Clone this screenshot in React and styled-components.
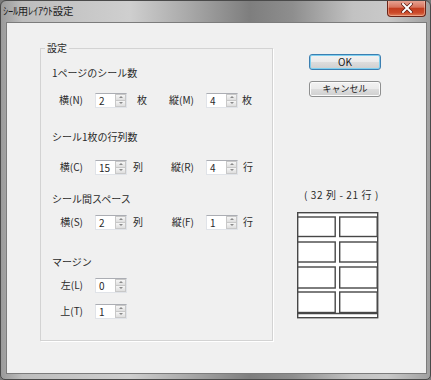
import React from 'react';
import styled, { createGlobalStyle } from 'styled-components';

const GlobalStyle = createGlobalStyle`
  html, body {
    margin: 0;
    padding: 0;
    background: #7a7a7a;
  }
  body {
    font-family: "Noto Sans CJK JP", "Noto Sans", sans-serif;
    color: #2a2a2a;
  }
`;

const Window = styled.div`
  width: 431px;
  height: 380px;
  box-sizing: border-box;
  display: flex;
  flex-direction: column;
  background: linear-gradient(
    90deg,
    #9a9a9a 0%,
    #bdbdbd 5%,
    #cfcfcf 30%,
    #a8a8a8 44%,
    #7e7e7e 58%,
    #8e8e8e 68%,
    #c2c2c2 82%,
    #c9c9c9 90%,
    #a0a0a0 100%
  );
  border: 1px solid #4a4a4a;
  border-radius: 6px 6px 5px 5px;
  overflow: hidden;
`;

const TitleBar = styled.div`
  height: 21px;
  display: flex;
  align-items: flex-start;
  flex-shrink: 0;
`;

const Title = styled.span`
  margin-left: 2px;
  font-size: 10.5px;
  line-height: 20px;
  color: #1c1c1c;
  letter-spacing: -0.3px;
`;

const CloseButton = styled.div`
  margin-left: auto;
  margin-right: 4px;
  margin-top: -1px;
  width: 39px;
  height: 17px;
  box-sizing: border-box;
  display: flex;
  align-items: center;
  justify-content: center;
  border: 1px solid #6b2418;
  border-top: none;
  border-radius: 0 0 4px 4px;
  background: linear-gradient(
    180deg,
    #e9a99a 0%,
    #d8735c 45%,
    #c33d1f 52%,
    #cc4a2a 80%,
    #e0805c 100%
  );
  box-shadow: inset 0 0 0 1px rgba(255, 210, 190, 0.45);
`;

const Client = styled.div`
  flex: 1;
  margin: 0 3px 5px 5px;
  border: 1px solid #7c7c7c;
  background: #f0f0f0;
  display: flex;
  align-items: flex-start;
`;

const Group = styled.fieldset`
  margin: 18px 0 0 33px;
  padding: 0 0 21px 4px;
  width: 233px;
  box-sizing: border-box;
  min-width: 0;
  border: 1px solid #d3d3d3;
  box-shadow: 1px 1px 0 #ffffff;
`;

const Legend = styled.legend`
  padding: 0 2px;
  font-size: 10px;
  line-height: 14px;
`;

const GroupBody = styled.div`
  display: flex;
  flex-direction: column;
  padding-left: 7px;
`;

const Heading = styled.div`
  margin-top: ${p => p.$top}px;
  font-size: 10px;
  line-height: 14px;
  height: 14px;
  white-space: nowrap;
`;

const Row = styled.div`
  margin-top: ${p => p.$top}px;
  height: 16px;
  display: flex;
  align-items: center;
`;

const Field = styled.div`
  display: flex;
  align-items: center;
  width: ${p => (p.$width ? `${p.$width}px` : 'auto')};
`;

const FieldLabel = styled.span`
  width: 31px;
  margin-right: 12px;
  text-align: right;
  font-size: 10px;
  line-height: 14px;
  white-space: nowrap;
`;

const Unit = styled.span`
  margin-left: ${p => p.$gap}px;
  font-size: 10px;
  line-height: 14px;
`;

const Spin = styled.div`
  width: 32px;
  height: 15px;
  box-sizing: border-box;
  display: flex;
  border: 1px solid #e0e3e8;
  border-top-color: #abadb3;
  background: #fff;
`;

const SpinValue = styled.span`
  flex: 1;
  padding-left: 3px;
  font-size: 10px;
  line-height: 13px;
`;

const SpinButtons = styled.div`
  width: 11px;
  display: flex;
  flex-direction: column;
`;

const SpinButton = styled.div`
  flex: 1;
  display: flex;
  align-items: center;
  justify-content: center;
  border: 1px solid #c8c8c8;
  margin-top: ${p => (p.$down ? '-1px' : '0')};
  background: linear-gradient(180deg, #f6f6f6, #dedede);
  &::after {
    content: '';
    width: 0;
    height: 0;
    border-left: 2px solid transparent;
    border-right: 2px solid transparent;
    ${p =>
      p.$down
        ? 'border-top: 2px solid #8a8a8a;'
        : 'border-bottom: 2px solid #8a8a8a;'}
  }
`;

const Side = styled.div`
  margin-top: 31px;
  padding-left: 24px;
  display: flex;
  flex-direction: column;
  align-items: flex-start;
`;

const Button = styled.div`
  margin-left: 12px;
  margin-top: ${p => p.$top || 0}px;
  width: 72px;
  height: 16px;
  box-sizing: border-box;
  display: flex;
  align-items: center;
  justify-content: center;
  border: 1px solid ${p => (p.$default ? '#3c7fb1' : '#8e8f8f')};
  border-radius: 3px;
  background: linear-gradient(180deg, #f2f2f2 0%, #ebebeb 48%, #dddddd 52%, #cfcfcf 100%);
  box-shadow: ${p =>
    p.$default ? 'inset 0 0 0 1px #7fd0f0' : 'inset 0 0 0 1px #fbfbfb'};
  font-size: ${p => p.$size || 10}px;
  line-height: 14px;
  color: #1a1a1a;
`;

const Caption = styled.div`
  margin-top: 92px;
  margin-left: 7px;
  font-size: 10px;
  line-height: 12px;
  letter-spacing: 0.6px;
  white-space: pre;
`;

const PreviewBox = styled.svg`
  margin-top: 11px;
  display: block;
`;

const SpinBox = ({ value }) => (
  <Spin>
    <SpinValue>{value}</SpinValue>
    <SpinButtons>
      <SpinButton />
      <SpinButton $down />
    </SpinButtons>
  </Spin>
);

const Pair = ({ label, value, unit, gap, width }) => (
  <Field $width={width}>
    <FieldLabel>{label}</FieldLabel>
    <SpinBox value={value} />
    {unit && <Unit $gap={gap}>{unit}</Unit>}
  </Field>
);

const cols = [0.5, 42.5];
const rows = [
  [5, 19.5],
  [30, 20],
  [55, 21],
  [80, 20.5],
];

const Preview = () => (
  <PreviewBox width="82" height="107" viewBox="0 0 82 107">
    <g fill="#fff" stroke="#474747" strokeWidth="1.4">
      <rect x="0.7" y="0.7" width="80" height="105" />
      <line x1="0.7" y1="101.5" x2="80.7" y2="101.5" />
      {rows.map(([y, h]) =>
        cols.map(x => (
          <rect key={`${x}-${y}`} x={x + 0.2} y={y} width="37.5" height={h} />
        ))
      )}
    </g>
  </PreviewBox>
);

const CloseIcon = () => (
  <svg width="12" height="10" viewBox="0 0 12 10">
    <path d="M2 1 L10 9 M10 1 L2 9" stroke="#5a1a10" strokeWidth="3.4" strokeLinecap="square" />
    <path d="M2 1 L10 9 M10 1 L2 9" stroke="#fff" strokeWidth="2" strokeLinecap="square" />
  </svg>
);

export default function App() {
  return (
    <>
      <GlobalStyle />
      <Window>
        <TitleBar>
          <Title>ｼｰﾙ用ﾚｲｱｳﾄ設定</Title>
          <CloseButton>
            <CloseIcon />
          </CloseButton>
        </TitleBar>
        <Client>
          <Group>
            <Legend>設定</Legend>
            <GroupBody>
              <Heading $top={11}>1ページのシール数</Heading>
              <Row $top={12}>
                <Pair label="横(N)" value="2" unit="枚" gap={10} width={111} />
                <Pair label="縦(M)" value="4" unit="枚" gap={4} />
              </Row>

              <Heading $top={22}>シール1枚の行列数</Heading>
              <Row $top={15}>
                <Pair label="横(C)" value="15" unit="列" gap={6} width={111} />
                <Pair label="縦(R)" value="4" unit="行" gap={5} />
              </Row>

              <Heading $top={17}>シール間スペース</Heading>
              <Row $top={8}>
                <Pair label="横(S)" value="2" unit="列" gap={6} width={111} />
                <Pair label="縦(F)" value="1" unit="行" gap={5} />
              </Row>

              <Heading $top={25}>マージン</Heading>
              <Row $top={8}>
                <Pair label="左(L)" value="0" />
              </Row>
              <Row $top={10}>
                <Pair label="上(T)" value="1" />
              </Row>
            </GroupBody>
          </Group>

          <Side>
            <Button $default>OK</Button>
            <Button $top={11} $size={9}>キャンセル</Button>
            <Caption>( 32 列 - 21 行 )</Caption>
            <Preview />
          </Side>
        </Client>
      </Window>
    </>
  );
}
